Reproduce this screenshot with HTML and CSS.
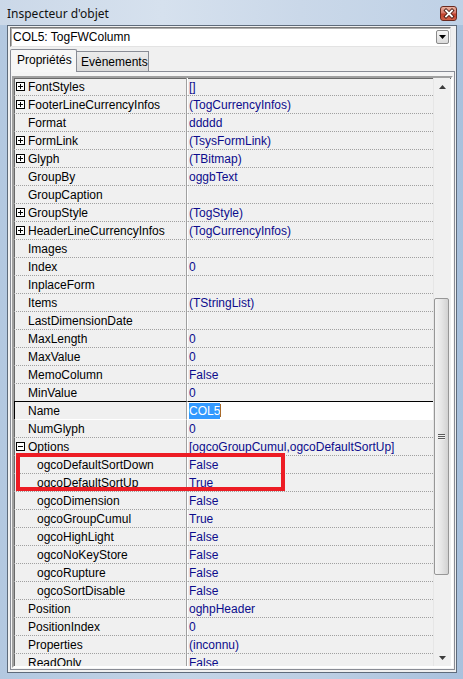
FILE: index.html
```html
<!DOCTYPE html>
<html>
<head>
<meta charset="utf-8">
<link rel="stylesheet" href="styles.css">
</head>
<body>
<div class="window">
  <div class="titlebar">
    <span class="title">Inspecteur d'objet</span>
    <div class="close">
      <svg width="14" height="13" viewBox="0 0 14 13"><path d="M4 3.5l6 6M10 3.5l-6 6" stroke="#4a1c14" stroke-width="3.6" stroke-linecap="square"/><path d="M4 3.5l6 6M10 3.5l-6 6" stroke="#fff" stroke-width="1.8" stroke-linecap="square"/></svg>
    </div>
  </div>
  <div class="client">
    <div class="combo">
      <span class="combo-text">COL5: TogFWColumn</span>
      <div class="ddbtn"><svg width="7" height="4" viewBox="0 0 7 4"><path d="M0 0h7L3.5 4z" fill="#000"/></svg></div>
    </div>
    <div class="tabs">
      <div class="tab active">Propriétés</div>
      <div class="tab">Evènements</div>
    </div>
    <div class="page">
      <div class="grid">
        <div class="rows">
          <div class="row"><div class="name"><svg class="box" width="9" height="9" viewBox="0 0 9 9"><rect x=".5" y=".5" width="8" height="8" fill="#fff" stroke="#000"/><path d="M2 4.5h5M4.5 2v5" stroke="#000"/></svg>FontStyles</div><div class="val">[]</div></div>
          <div class="row"><div class="name"><svg class="box" width="9" height="9" viewBox="0 0 9 9"><rect x=".5" y=".5" width="8" height="8" fill="#fff" stroke="#000"/><path d="M2 4.5h5M4.5 2v5" stroke="#000"/></svg>FooterLineCurrencyInfos</div><div class="val">(TogCurrencyInfos)</div></div>
          <div class="row"><div class="name plain">Format</div><div class="val">ddddd</div></div>
          <div class="row"><div class="name"><svg class="box" width="9" height="9" viewBox="0 0 9 9"><rect x=".5" y=".5" width="8" height="8" fill="#fff" stroke="#000"/><path d="M2 4.5h5M4.5 2v5" stroke="#000"/></svg>FormLink</div><div class="val">(TsysFormLink)</div></div>
          <div class="row"><div class="name"><svg class="box" width="9" height="9" viewBox="0 0 9 9"><rect x=".5" y=".5" width="8" height="8" fill="#fff" stroke="#000"/><path d="M2 4.5h5M4.5 2v5" stroke="#000"/></svg>Glyph</div><div class="val">(TBitmap)</div></div>
          <div class="row"><div class="name plain">GroupBy</div><div class="val">oggbText</div></div>
          <div class="row"><div class="name plain">GroupCaption</div><div class="val"></div></div>
          <div class="row"><div class="name"><svg class="box" width="9" height="9" viewBox="0 0 9 9"><rect x=".5" y=".5" width="8" height="8" fill="#fff" stroke="#000"/><path d="M2 4.5h5M4.5 2v5" stroke="#000"/></svg>GroupStyle</div><div class="val">(TogStyle)</div></div>
          <div class="row"><div class="name"><svg class="box" width="9" height="9" viewBox="0 0 9 9"><rect x=".5" y=".5" width="8" height="8" fill="#fff" stroke="#000"/><path d="M2 4.5h5M4.5 2v5" stroke="#000"/></svg>HeaderLineCurrencyInfos</div><div class="val">(TogCurrencyInfos)</div></div>
          <div class="row"><div class="name plain">Images</div><div class="val"></div></div>
          <div class="row"><div class="name plain">Index</div><div class="val">0</div></div>
          <div class="row"><div class="name plain">InplaceForm</div><div class="val"></div></div>
          <div class="row"><div class="name plain">Items</div><div class="val">(TStringList)</div></div>
          <div class="row"><div class="name plain">LastDimensionDate</div><div class="val"></div></div>
          <div class="row"><div class="name plain">MaxLength</div><div class="val">0</div></div>
          <div class="row"><div class="name plain">MaxValue</div><div class="val">0</div></div>
          <div class="row"><div class="name plain">MemoColumn</div><div class="val">False</div></div>
          <div class="row before-sel"><div class="name plain">MinValue</div><div class="val">0</div></div>
          <div class="row selected"><div class="name plain">Name</div><div class="val edit"><span class="seltext">COL5</span><span class="caret"></span></div></div>
          <div class="row"><div class="name plain">NumGlyph</div><div class="val">0</div></div>
          <div class="row"><div class="name"><svg class="box" width="9" height="9" viewBox="0 0 9 9"><rect x=".5" y=".5" width="8" height="8" fill="#fff" stroke="#000"/><path d="M2 4.5h5" stroke="#000"/></svg>Options</div><div class="val">[ogcoGroupCumul,ogcoDefaultSortUp]</div></div>
          <div class="row"><div class="name sub">ogcoDefaultSortDown</div><div class="val">False</div></div>
          <div class="row"><div class="name sub">ogcoDefaultSortUp</div><div class="val">True</div></div>
          <div class="row"><div class="name sub">ogcoDimension</div><div class="val">False</div></div>
          <div class="row"><div class="name sub">ogcoGroupCumul</div><div class="val">True</div></div>
          <div class="row"><div class="name sub">ogcoHighLight</div><div class="val">False</div></div>
          <div class="row"><div class="name sub">ogcoNoKeyStore</div><div class="val">False</div></div>
          <div class="row"><div class="name sub">ogcoRupture</div><div class="val">False</div></div>
          <div class="row"><div class="name sub">ogcoSortDisable</div><div class="val">False</div></div>
          <div class="row"><div class="name plain">Position</div><div class="val">oghpHeader</div></div>
          <div class="row"><div class="name plain">PositionIndex</div><div class="val">0</div></div>
          <div class="row"><div class="name plain">Properties</div><div class="val">(inconnu)</div></div>
          <div class="row"><div class="name plain">ReadOnly</div><div class="val">False</div></div>
        </div>
        <div class="vscroll">
          <div class="sbtn"><svg width="7" height="4" viewBox="0 0 7 4"><path d="M3.5 0L7 4H0z" fill="#3c3c3c"/></svg></div>
          <div class="track-top"></div>
          <div class="thumb"><span class="grip"></span></div>
          <div class="track-bottom"></div>
          <div class="sbtn"><svg width="7" height="4" viewBox="0 0 7 4"><path d="M0 0h7L3.5 4z" fill="#3c3c3c"/></svg></div>
        </div>
      </div>
    </div>
  </div>
  <div class="highlight"></div>
</div>
</body>
</html>
```

FILE: styles.css
```css
* { box-sizing: border-box; }
html, body { margin: 0; padding: 0; }
body { width: 463px; height: 679px; overflow: hidden; background: #b7cbe2; }

.window {
  position: relative;
  width: 463px;
  height: 679px;
  background: linear-gradient(90deg, #b3c8e0 0%, #c4d4e6 40%, #bccee3 70%, #a9c1dd 100%);
  display: flex;
  flex-direction: column;
}

.titlebar {
  flex: none;
  height: 25px;
  display: flex;
  align-items: center;
  justify-content: space-between;
  padding: 0 6px 0 7px;
  background: linear-gradient(90deg, #cbd8e8 0%, #d6e1ee 35%, #cad8e9 65%, #bfd1e6 100%);
}
.title {
  font-family: "Noto Sans", "DejaVu Sans", sans-serif;
  font-size: 12px;
  color: #111;
  margin-top: 1px;
}
.close {
  width: 17px;
  height: 15px;
  margin-top: 1px;
  border: 1px solid #6a2a20;
  border-radius: 3px;
  background: linear-gradient(#eab3a2 0%, #d8796a 45%, #c1402c 55%, #d2624a 100%);
  display: flex;
  align-items: center;
  justify-content: center;
}

.client {
  flex: 1;
  min-height: 0;
  margin: 0 6px 6px 7px;
  border: 1px solid #5e6b7b;
  background: #f0f0f0;
  display: flex;
  flex-direction: column;
  padding: 1px 0 2px 2px;
  font-family: "Liberation Sans", Arial, sans-serif;
  font-size: 12px;
}

.combo {
  flex: none;
  width: 441px;
  height: 20px;
  background: #fff;
  border: 1px solid;
  border-color: #7a7a7a #e3e3e3 #e3e3e3 #7a7a7a;
  box-shadow: inset 1px 1px 0 #b0b0b0;
  display: flex;
  align-items: center;
  justify-content: space-between;
  padding: 0 1px 0 2px;
}
.combo-text { font-size: 12px; color: #000; }
.ddbtn {
  width: 13px;
  height: 14px;
  border: 1px solid #8a8a8a;
  border-radius: 2px;
  background: linear-gradient(#f6f6f6, #dcdcdc);
  display: flex;
  align-items: center;
  justify-content: center;
}

.tabs {
  flex: none;
  margin-top: 2px;
  height: 23px;
  display: flex;
  align-items: flex-end;
  position: relative;
  z-index: 1;
}
.tab {
  font-size: 12px;
  color: #000;
  border: 1px solid #898c95;
  border-bottom: none;
  display: flex;
  align-items: center;
}
.tab.active {
  height: 23px;
  width: 67px;
  padding-left: 6px;
  padding-bottom: 2px;
  background: #f6f6f6;
  border-radius: 2px 2px 0 0;
}
.tab:not(.active) {
  height: 20px;
  width: 72px;
  padding-left: 4px;
  margin-bottom: 1px;
  background: linear-gradient(#ececec, #dadada);
  border-left: none;
}

.page {
  flex: 1;
  min-height: 0;
  margin-top: -1px;
  width: 445px;
  border: 1px solid #898c95;
  background: #f4f4f4;
  padding: 4px 1px 1px 1px;
  display: flex;
}

.grid {
  flex: 1;
  min-height: 0;
  border: 2px solid;
  border-color: #a0a0a0 #ffffff #ffffff #a0a0a0;
  box-shadow: inset 1px 1px 0 #696969;
  background: #f0f0f0;
  display: flex;
  overflow: hidden;
}

.rows {
  width: 419px;
  overflow: hidden;
  display: flex;
  flex-direction: column;
}
.row {
  flex: 0 0 18px;
  height: 18px;
  display: flex;
}
.name {
  width: 173px;
  height: 18px;
  display: flex;
  align-items: center;
  padding-left: 2px;
  border-right: 1px solid #a0a0a0;
  border-bottom: 1px dotted #a0a0a0;
  color: #000;
  white-space: nowrap;
}
.name .box { margin-right: 3px; flex: none; }
.name.plain { padding-left: 14px; }
.name.sub { padding-left: 23px; }
.val {
  flex: 1;
  height: 18px;
  display: flex;
  align-items: center;
  padding-left: 1px;
  border-left: 1px solid #ffffff;
  border-bottom: 1px dotted #a0a0a0;
  color: #0c0c8c;
  white-space: nowrap;
}

.row.before-sel .name, .row.before-sel .val { border-bottom: 1px solid #000; }
.row.selected .name { border-left: 1px solid #000; padding-left: 13px; border-bottom: 1px solid #fff; }
.row.selected .val { background: #fff; border-bottom: 1px solid #fff; }
.seltext { background: #3399ff; color: #fff; padding: 1px 0; }
.caret { width: 1px; height: 13px; background: #a86a2a; }

.vscroll {
  width: 17px;
  display: flex;
  flex-direction: column;
  background: #f0f0f0;
  border-left: 1px solid #e6e6e6;
}
.sbtn {
  height: 17px;
  flex: none;
  display: flex;
  align-items: center;
  justify-content: center;
}
.track-top { height: 203px; flex: none; }
.thumb {
  height: 277px;
  flex: none;
  margin: 0 1px 0 0;
  border: 1px solid #979797;
  border-radius: 2px;
  background: linear-gradient(90deg, #f4f4f4 0%, #e6e6e6 50%, #d2d2d2 100%);
  display: flex;
  align-items: center;
  justify-content: center;
}
.grip {
  width: 7px;
  height: 6px;
  background: repeating-linear-gradient(#5a5a5a 0 1px, #f0f0f0 1px 2px);
}
.track-bottom { flex: 1; }

.highlight {
  position: absolute;
  left: 16px;
  top: 453px;
  width: 269px;
  height: 38px;
  border: 4px solid #ed1c24;
}
```
